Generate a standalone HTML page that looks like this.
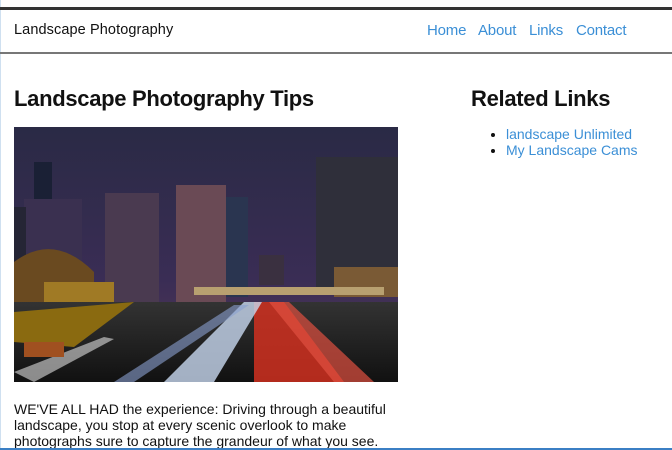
<!DOCTYPE html>
<html><head><meta charset="utf-8"><style>
*{margin:0;padding:0;box-sizing:border-box}
body{width:672px;height:450px;overflow:hidden;background:#fff;font-family:"Liberation Sans",Arial,sans-serif;position:relative}
.lb{position:absolute;left:0;top:0;width:1px;height:450px;background:#cfe0f0}
.bar{position:absolute;left:0;top:7px;width:672px;height:3px;background:#333}
.nav{position:absolute;left:0;top:52px;width:672px;height:2px;background:#777}
.brand{position:absolute;left:14px;top:22px;font-size:14.5px;color:#111;letter-spacing:0.1px}
.links{position:absolute;top:22px;font-size:15px;color:#3b8fd6;letter-spacing:-0.2px}
h1{position:absolute;left:14px;top:86px;font-size:22px;font-weight:bold;color:#111;letter-spacing:-0.3px}
h2{position:absolute;left:471px;top:86px;font-size:22px;font-weight:bold;color:#111;letter-spacing:-0.3px}
ul{position:absolute;left:506px;top:126px;font-size:14px;line-height:16px;color:#3b8fd6}
li{list-style:disc;color:#111}
li span{color:#3b8fd6}
.img{position:absolute;left:14px;top:127px;width:384px;height:255px}
p{position:absolute;left:14px;top:401px;width:390px;font-size:14px;line-height:16px;color:#111}
.bot{position:absolute;left:0;top:448px;width:672px;height:2px;background:#3b7fc4}
</style></head><body>
<div class="lb"></div>
<div class="bar"></div>
<div class="brand">Landscape Photography</div>
<div class="links" style="left:427px">Home</div>
<div class="links" style="left:478px">About</div>
<div class="links" style="left:529px">Links</div>
<div class="links" style="left:576px">Contact</div>
<div class="nav"></div>
<h1>Landscape Photography Tips</h1>
<h2>Related Links</h2>
<ul><li><span>landscape Unlimited</span></li><li><span>My Landscape Cams</span></li></ul>
<svg class="img" viewBox="0 0 384 255" preserveAspectRatio="none">
<defs><linearGradient id="sky" x1="0" y1="0" x2="0" y2="1"><stop offset="0" stop-color="#2a2a45"/><stop offset="0.6" stop-color="#3a2d55"/><stop offset="1" stop-color="#5a3a55"/></linearGradient>
<linearGradient id="rd" x1="0" y1="0" x2="0" y2="1"><stop offset="0" stop-color="#333"/><stop offset="1" stop-color="#111"/></linearGradient></defs>
<rect width="384" height="255" fill="url(#sky)"/>
<rect x="20" y="35" width="18" height="80" fill="#1a2035"/>
<rect x="10" y="72" width="58" height="90" fill="#3a3050"/>
<rect x="0" y="80" width="12" height="80" fill="#252535"/>
<rect x="91" y="66" width="54" height="110" fill="#4a3a50"/>
<rect x="162" y="58" width="50" height="120" fill="#6a4a55"/>
<rect x="212" y="70" width="22" height="100" fill="#2a3550"/>
<rect x="302" y="30" width="82" height="130" fill="#2f2f3a"/>
<rect x="245" y="128" width="25" height="30" fill="#3a3040"/>
<path d="M0 135 Q40 105 80 145 L80 180 L0 180Z" fill="#6a4a20"/>
<rect x="30" y="155" width="70" height="30" fill="#a07a25"/>
<rect x="320" y="140" width="64" height="30" fill="#7a5a35"/>
<rect x="180" y="160" width="190" height="8" fill="#b8a070"/>
<rect x="0" y="175" width="384" height="80" fill="url(#rd)"/>
<path d="M0 185 L120 175 L60 220 L0 215Z" fill="#8a6a10"/>
<path d="M240 175 L270 175 L330 255 L240 255Z" fill="#d03020" opacity="0.85"/>
<path d="M255 175 L275 175 L360 255 L320 255Z" fill="#e05040" opacity="0.7"/>
<path d="M230 175 L248 175 L200 255 L150 255Z" fill="#c8d8f0" opacity="0.8"/>
<path d="M220 178 L235 178 L120 255 L100 255Z" fill="#8aa0d0" opacity="0.6"/>
<path d="M0 245 L90 210 L100 212 L20 255Z" fill="#ddd" opacity="0.6"/>
<rect x="10" y="215" width="40" height="15" fill="#a05020"/>
</svg>
<p>WE'VE ALL HAD the experience: Driving through a beautiful landscape, you stop at every scenic overlook to make photographs sure to capture the grandeur of what you see.</p>
<div class="bot"></div>
</body></html>
